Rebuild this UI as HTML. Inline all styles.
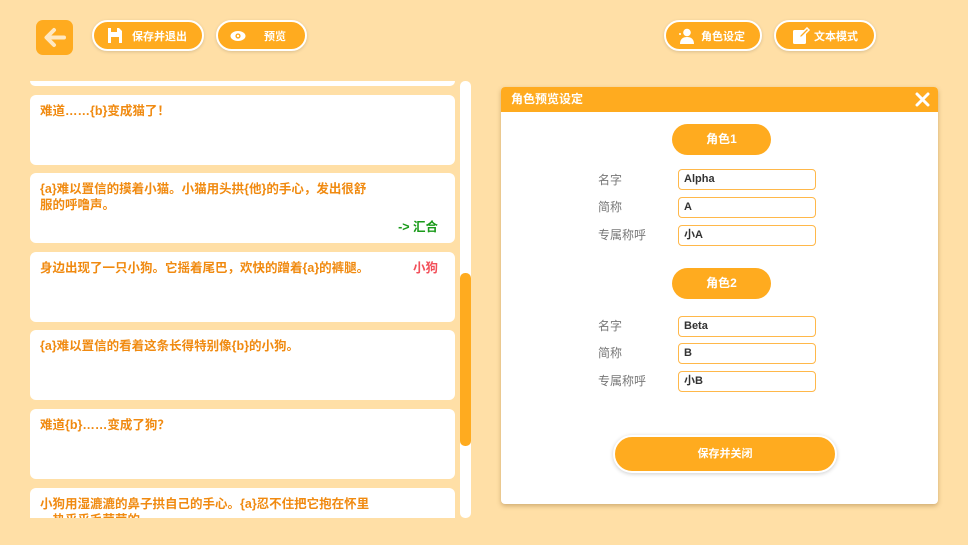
<!DOCTYPE html>
<html><head><meta charset="utf-8"><style>
*{box-sizing:border-box;margin:0;padding:0}
body{width:968px;height:545px;background:#FFDFA6;position:relative;overflow:hidden;font-family:"Liberation Sans","Noto Sans CJK SC",sans-serif;font-weight:bold}
.a{position:absolute}
.btn{position:absolute;height:31px;top:20px;background:#FFAB1F;border:2px solid #fff;border-radius:16px;color:#fff;font-size:11px;display:flex;align-items:center;box-shadow:0 1px 3px rgba(0,0,0,.15)}
.card{position:absolute;left:30px;width:425px;height:70px;background:#fff;border-radius:6px;color:#F08A10;font-size:12.5px;padding:8px 10px;line-height:16px}
.lbl{position:absolute;left:598px;color:#777;font-size:12px;font-weight:normal}
.in{position:absolute;left:678px;width:138px;height:21px;border:1.5px solid #FFB84A;border-radius:4px;font-size:11px;color:#333;padding:0 5px;line-height:18px;font-family:"Liberation Sans","Noto Sans CJK SC",sans-serif}
.pill{position:absolute;left:672px;width:99px;height:31px;border-radius:16px;background:#FFAB1F;color:#fff;font-size:12px;text-align:center;line-height:31px}
</style></head><body>
<div class="a" style="left:36px;top:20px;width:37px;height:35px;background:#FFAB1F;border-radius:7px"><svg width="37" height="35" viewBox="0 0 37 35"><path d="M28 17.5H11M18 10l-7.5 7.5L18 25" stroke="#FFE8C2" stroke-width="4" fill="none" stroke-linecap="round" stroke-linejoin="round"/></svg></div>
<div class="btn" style="left:92px;width:112px"><svg style="margin-left:13px" width="16" height="17" viewBox="0 0 16 17"><path d="M1 1h11l3 3v12H1z" fill="#fff"/><rect x="4" y="1" width="6" height="4" fill="#FFAB1F"/><rect x="4" y="10" width="8" height="6" fill="#FFAB1F"/></svg><span style="margin-left:9px">保存并退出</span></div>
<div class="btn" style="left:216px;width:91px"><svg style="margin-left:12px" width="16" height="12" viewBox="0 0 16 12"><ellipse cx="8" cy="6" rx="7.5" ry="5" fill="#fff"/><circle cx="8" cy="6" r="2.6" fill="#FFAB1F"/><circle cx="8" cy="6" r="1.2" fill="#fff"/></svg><span style="margin-left:18px">预览</span></div>
<div class="btn" style="left:664px;width:98px"><svg style="margin-left:12px" width="16" height="16" viewBox="0 0 16 16"><circle cx="9" cy="4.5" r="3.8" fill="#fff"/><path d="M2 16c0-5 3-7 7-7s7 2 7 7z" fill="#fff"/><circle cx="2" cy="6" r="1" fill="#fff"/></svg><span style="margin-left:7px">角色设定</span></div>
<div class="btn" style="left:774px;width:102px"><svg style="margin-left:16px" width="18" height="18" viewBox="0 0 18 18"><rect x="1" y="3" width="13" height="14" rx="1.5" fill="#fff"/><path d="M7 11l1-3 7-7 2 2-7 7z" fill="#FFAB1F" stroke="#fff" stroke-width="1.5"/></svg><span style="margin-left:4px">文本模式</span></div>

<div class="a" style="left:30px;top:81px;width:425px;height:5px;background:#fff;border-radius:0 0 6px 6px"></div>
<div class="card" style="top:95px">难道……{b}变成猫了！</div>
<div class="card" style="top:173px">{a}难以置信的摸着小猫。小猫用头拱{他}的手心，发出很舒<br>服的呼噜声。<span class="a" style="right:17px;top:46px;color:#1A9A1A">-&gt; 汇合</span></div>
<div class="card" style="top:252px">身边出现了一只小狗。它摇着尾巴，欢快的蹭着{a}的裤腿。<span class="a" style="right:17px;top:8px;color:#F2505A">小狗</span></div>
<div class="card" style="top:330px">{a}难以置信的看着这条长得特别像{b}的小狗。</div>
<div class="card" style="top:409px">难道{b}……变成了狗？</div>
<div class="a" style="left:30px;top:488px;width:425px;height:30px;overflow:hidden"><div class="card" style="left:0;top:0">小狗用湿漉漉的鼻子拱自己的手心。{a}忍不住把它抱在怀里<br>，热乎乎毛茸茸的。</div></div>
<div class="a" style="left:460px;top:81px;width:11px;height:437px;background:#fff;border-radius:5px"></div>
<div class="a" style="left:460px;top:273px;width:11px;height:173px;background:#FFAB1F;border-radius:5px"></div>

<div class="a" style="left:501px;top:87px;width:437px;height:417px;background:#fff;border-radius:4px;box-shadow:0 2px 5px rgba(150,110,50,.45);overflow:hidden">
<div style="height:25px;background:#FFAB1F;color:#fff;font-size:12px;line-height:24px;padding-left:10px">角色预览设定</div>
<svg class="a" style="right:8px;top:5px" width="15" height="15" viewBox="0 0 15 15"><path d="M2 2l11 11M13 2L2 13" stroke="#fff" stroke-width="3" stroke-linecap="round"/></svg>
</div>
<div class="pill" style="top:124px">角色1</div>
<div class="lbl" style="top:171px">名字</div><div class="in" style="top:169px">Alpha</div>
<div class="lbl" style="top:198px">简称</div><div class="in" style="top:197px">A</div>
<div class="lbl" style="top:226px">专属称呼</div><div class="in" style="top:225px">小A</div>
<div class="pill" style="top:268px">角色2</div>
<div class="lbl" style="top:317px">名字</div><div class="in" style="top:316px">Beta</div>
<div class="lbl" style="top:344px">简称</div><div class="in" style="top:343px">B</div>
<div class="lbl" style="top:372px">专属称呼</div><div class="in" style="top:371px">小B</div>
<div class="a" style="left:613px;top:435px;width:224px;height:38px;border-radius:19px;background:#FFAB1F;border:2px solid #fff;box-shadow:0 1px 4px rgba(0,0,0,.2);color:#fff;font-size:11px;text-align:center;line-height:34px">保存并关闭</div>
</body></html>
